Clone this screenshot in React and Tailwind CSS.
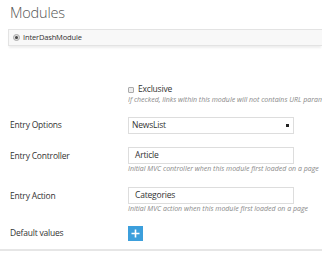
export default function App() {
  const font = { fontFamily: '"Open Sans", "Noto Sans", sans-serif' };
  return (
    <div className="w-[322px] h-[254px] overflow-hidden bg-white text-[#333] relative" style={font}>
      <div className="pl-[10px] pt-[3px] text-[14.5px] leading-[20px] font-light tracking-[-0.2px] text-[#555]">Modules</div>
      <div className="ml-[8px] mt-[6px] h-[17px] border-y border-l border-[#e3e3e3] bg-[#f8f8f8] flex items-center pl-[4px] gap-[3px] shadow-[0_3px_2px_-1px_#eeeeee]">
        <span className="w-[7px] h-[7px] rounded-full border border-[#aaa] bg-[#ddd] flex items-center justify-center">
          <span className="w-[3px] h-[3px] rounded-full bg-[#444]"></span>
        </span>
        <span className="text-[7.5px] tracking-[-0.15px] text-[#333]">InterDashModule</span>
      </div>

      <div className="mt-[38px] pl-[128px] whitespace-nowrap">
        <div className="flex items-center gap-[4px] h-[11px]">
          <span className="w-[6px] h-[6px] border border-[#aaa] bg-[#eee] rounded-[1px]"></span>
          <span className="text-[8.5px] tracking-[-0.2px] text-[#333]">Exclusive</span>
        </div>
        <div className="text-[7px] italic text-[#888] leading-[10px] overflow-hidden w-[194px]">If checked, links within this module will not contains URL parameters</div>
      </div>

      <div className="mt-[12px] flex items-center pl-[10px] tracking-[-0.2px]">
        <div className="w-[118px] text-[8.5px] text-[#333]">Entry Options</div>
        <div className="w-[166px] h-[17px] border border-[#ddd] flex items-center justify-between pl-[3px] pr-[4px]">
          <span className="text-[8.5px]">NewsList</span>
          <span className="w-[3px] h-[3px] bg-[#222]"></span>
        </div>
      </div>

      <div className="mt-[13px] flex pl-[10px]">
        <div className="w-[118px] text-[8.5px] tracking-[-0.2px] leading-[17px]">Entry Controller</div>
        <div>
          <div className="w-[166px] h-[17px] border border-[#ddd] flex items-center px-[6px] text-[8.5px] tracking-[-0.2px]">Article</div>
          <div className="text-[7px] italic text-[#888] leading-[10px] whitespace-nowrap">Initial MVC controller when this module first loaded on a page</div>
        </div>
      </div>

      <div className="mt-[13px] flex pl-[10px]">
        <div className="w-[118px] text-[8.5px] tracking-[-0.2px] leading-[17px]">Entry Action</div>
        <div>
          <div className="w-[166px] h-[17px] border border-[#ddd] flex items-center px-[6px] text-[8.5px] tracking-[-0.2px]">Categories</div>
          <div className="text-[7px] italic text-[#888] leading-[10px] whitespace-nowrap">Initial MVC action when this module first loaded on a page</div>
        </div>
      </div>

      <div className="mt-[12px] flex items-center pl-[10px]">
        <div className="w-[118px] text-[8.5px] tracking-[-0.2px]">Default values</div>
        <div className="w-[15px] h-[15px] bg-[#3c9fdc] flex items-center justify-center">
          <svg width="9" height="9" viewBox="0 0 9 9"><path d="M4.5 0.5v8M0.5 4.5h8" stroke="white" strokeWidth="1.6" /></svg>
        </div>
      </div>

      <div className="absolute left-0 right-0 top-[249px] h-[2px] bg-[#e6e6e6]"></div>
    </div>
  );
}
